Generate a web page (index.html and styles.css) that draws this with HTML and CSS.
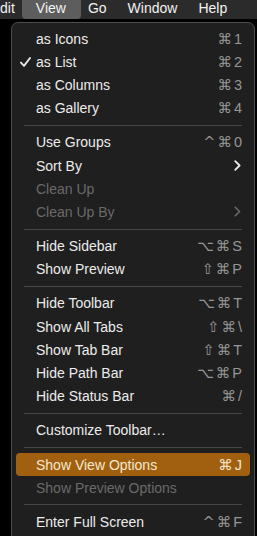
FILE: index.html
```html
<!DOCTYPE html>
<html lang="en">
<head>
  <meta charset="UTF-8">
  <title>View menu</title>
  <link rel="stylesheet" href="styles.css">
</head>
<body>
  <div class="menubar">
    <span class="title first">dit</span>
    <span class="title active">View</span>
    <span class="title after-active">Go</span>
    <span class="title">Window</span>
    <span class="title">Help</span>
  </div>

  <div class="menu">
    <div class="item"><span class="check"></span><span class="label">as Icons</span><span class="keys">⌘<b>1</b></span></div>
    <div class="item"><span class="check"><svg width="11" height="10" viewBox="0 0 11 10"><path d="M1 5.6 L4 8.8 L10 1" fill="none" stroke="#e8e8e8" stroke-width="1.9" stroke-linecap="round" stroke-linejoin="round"/></svg></span><span class="label">as List</span><span class="keys">⌘<b>2</b></span></div>
    <div class="item"><span class="check"></span><span class="label">as Columns</span><span class="keys">⌘<b>3</b></span></div>
    <div class="item"><span class="check"></span><span class="label">as Gallery</span><span class="keys">⌘<b>4</b></span></div>
    <div class="sep"></div>

    <div class="item"><span class="check"></span><span class="label">Use Groups</span><span class="keys">^⌘<b>0</b></span></div>
    <div class="item"><span class="check"></span><span class="label">Sort By</span><span class="arrow"><svg width="7" height="11" viewBox="0 0 7 11"><path d="M1.2 1.2 L5.6 5.5 L1.2 9.8" fill="none" stroke="#ececec" stroke-width="1.8" stroke-linecap="round" stroke-linejoin="round"/></svg></span></div>
    <div class="item disabled"><span class="check"></span><span class="label">Clean Up</span></div>
    <div class="item disabled"><span class="check"></span><span class="label">Clean Up By</span><span class="arrow"><svg width="7" height="11" viewBox="0 0 7 11"><path d="M1.2 1.2 L5.6 5.5 L1.2 9.8" fill="none" stroke="#6a6a6a" stroke-width="1.6" stroke-linecap="round" stroke-linejoin="round"/></svg></span></div>
    <div class="sep"></div>

    <div class="item"><span class="check"></span><span class="label">Hide Sidebar</span><span class="keys">⌥⌘<b>S</b></span></div>
    <div class="item"><span class="check"></span><span class="label">Show Preview</span><span class="keys">⇧⌘<b>P</b></span></div>
    <div class="sep"></div>

    <div class="item"><span class="check"></span><span class="label">Hide Toolbar</span><span class="keys">⌥⌘<b>T</b></span></div>
    <div class="item"><span class="check"></span><span class="label">Show All Tabs</span><span class="keys">⇧⌘<b>\</b></span></div>
    <div class="item"><span class="check"></span><span class="label">Show Tab Bar</span><span class="keys">⇧⌘<b>T</b></span></div>
    <div class="item"><span class="check"></span><span class="label">Hide Path Bar</span><span class="keys">⌥⌘<b>P</b></span></div>
    <div class="item"><span class="check"></span><span class="label">Hide Status Bar</span><span class="keys">⌘<b>/</b></span></div>
    <div class="sep"></div>

    <div class="item"><span class="check"></span><span class="label">Customize Toolbar…</span></div>
    <div class="sep"></div>

    <div class="item selected"><span class="check"></span><span class="label">Show View Options</span><span class="keys">⌘<b>J</b></span></div>
    <div class="item disabled"><span class="check"></span><span class="label">Show Preview Options</span></div>
    <div class="sep"></div>

    <div class="item"><span class="check"></span><span class="label">Enter Full Screen</span><span class="keys">^⌘<b>F</b></span></div>
  </div>
</body>
</html>
```

FILE: styles.css
```css
* {
  margin: 0;
  padding: 0;
  box-sizing: border-box;
}

html,
body {
  width: 257px;
  height: 536px;
  overflow: hidden;
}

body {
  background: #000;
  font-family: 'Liberation Sans', 'DejaVu Sans', sans-serif;
  font-size: 14px;
  color: #e6e6e6;
}

/* top menu bar */
.menubar {
  height: 19px;
  background: #2b2b2b;
  display: flex;
  align-items: flex-start;
  white-space: nowrap;
}

.title {
  line-height: 16px;
  height: 19px;
  color: #f2f2f2;
  margin-left: 21px;
}

.title.first {
  margin-left: 0;
  margin-right: 7px;
}

.title.active {
  margin-left: 0;
  padding: 0 15px 0 14px;
  background: #5d5d5d;
  border-radius: 0 0 4px 4px;
}

.title.after-active {
  margin-left: 7px;
}

/* dropdown */
.menu {
  margin: 3px 0 0 11px;
  width: 244px;
  height: 520px;
  background: #1f1f1f;
  border: 1px solid #4d4d4d;
  border-radius: 7px;
  padding: 4px 4px;
}

.item {
  height: 23.2px;
  display: flex;
  align-items: center;
  padding: 0 8px 0 4px;
  border-radius: 4px;
  color: #ececec;
  white-space: nowrap;
}

.check {
  width: 16px;
  display: flex;
  align-items: center;
}

.label {
  flex: 1;
  line-height: 16px;
}

.keys {
  color: #969696;
  font-family: 'DejaVu Sans', sans-serif;
  font-size: 14.5px;
  letter-spacing: 2px;
  line-height: 16px;
}

.keys b {
  font-weight: normal;
  font-family: 'Liberation Sans', sans-serif;
  font-size: 14.5px;
  letter-spacing: 0;
  margin-left: 0;
}

.arrow {
  display: flex;
  align-items: center;
  margin-right: 1px;
}

.item.disabled {
  color: #6a6a6a;
}

.item.selected {
  background: #a0600f;
  color: #f7e8d0;
}

.item.selected .keys {
  color: #f7e8d0;
}

.sep {
  height: 11px;
  margin: 0 8px;
  display: flex;
  align-items: center;
}

.sep::before {
  content: '';
  flex: 1;
  height: 1px;
  background: #474747;
}
```
